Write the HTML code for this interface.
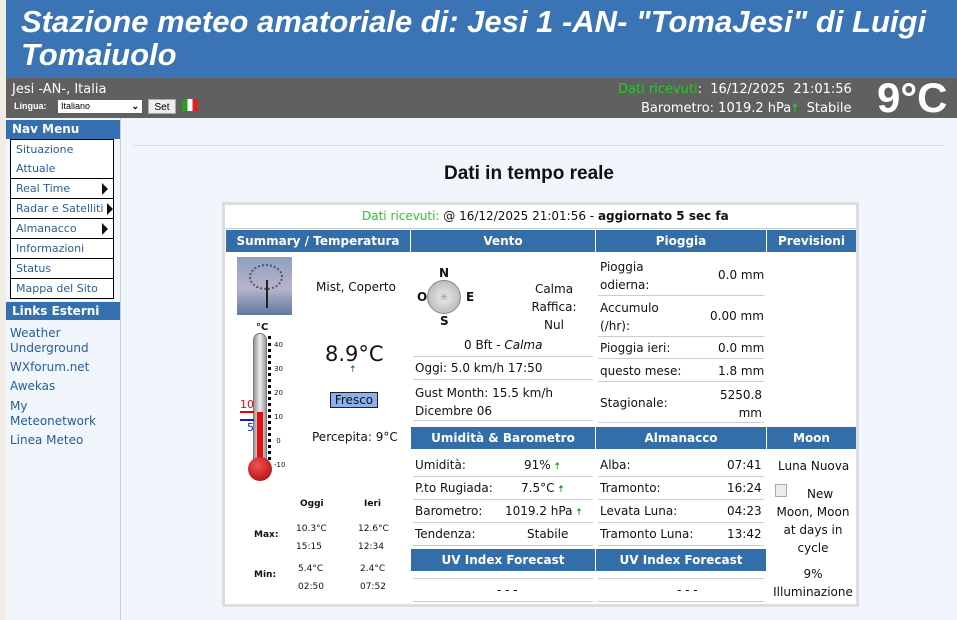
<!DOCTYPE html>
<html><head><meta charset="utf-8"><style>
*{margin:0;padding:0;box-sizing:border-box}
body{width:957px;height:620px;overflow:hidden;background:#f0f6fc;font-family:"DejaVu Sans","Liberation Sans",sans-serif;font-size:12px;color:#111;position:relative}
.a{position:absolute;white-space:nowrap}
#hdr{position:absolute;left:6px;top:0;width:951px;height:78px;background:#3a74b4}
#hdr h1{position:absolute;left:15px;top:5px;font:italic bold 31px/33px "Liberation Sans",sans-serif;color:#fff;width:930px;white-space:normal}
#bar{position:absolute;left:6px;top:78px;width:951px;height:40px;background:#606060;color:#fff}
.nh{position:absolute;left:6px;width:114px;background:#3470b0;color:#fff;font-weight:bold;font-size:12px;padding-left:6px}
.menu{position:absolute;left:10px;top:139px;width:104px;border:1px solid #000;background:#fff}
.menu div{border-bottom:1px solid #000;font-size:11px;color:#2a5d96;padding:0 5px;line-height:19px;position:relative}
.menu div:last-child{border-bottom:0}
.tri{position:absolute;right:5px;top:4px;width:0;height:0;border-left:6px solid #111;border-top:6px solid transparent;border-bottom:6px solid transparent}
.lk{position:absolute;left:10px;font-size:12px;color:#2a5d96;line-height:15px}
.th{position:absolute;background:#336ea9;color:#fff;font-weight:bold;font-size:12px;text-align:center;height:22px;line-height:22px}
.ln{position:absolute;height:1px;background:#ccc}
.g{color:#1a9a1a}
.up{color:#1a9a1a;font-size:10px}
</style></head><body>
<div class="a" style="left:0;top:0;width:6px;height:620px;background:#f0ece4"></div>
<div id="hdr"><h1>Stazione meteo amatoriale di: Jesi 1 -AN- "TomaJesi" di Luigi Tomaiuolo</h1></div>
<div id="bar">
<div class="a" style="left:6px;top:4px;font-size:13px">Jesi -AN-, Italia</div>
<div class="a" style="left:8px;top:23px;font-size:9px;font-weight:bold;font-family:'Liberation Sans',sans-serif">Lingua:</div>
<div class="a" style="left:52px;top:22px;width:84px;height:13px;background:#fff;color:#000;font:9px 'Liberation Sans',sans-serif;padding-left:3px;line-height:13px">Italiano<span style="position:absolute;right:3px;font-weight:bold">⌄</span></div>
<div class="a" style="left:142px;top:21px;width:28px;height:15px;background:#eee;color:#000;font:10px 'Liberation Sans',sans-serif;text-align:center;line-height:15px;border:1px solid #aaa">Set</div>
<div class="a" style="left:176px;top:21px;width:16px;height:12px;background:linear-gradient(90deg,#2a9a2a 33%,#fff 33% 66%,#d22 66%)"></div>
<div class="a" style="left:612px;top:4px;font-size:13px"><span style="color:#2c2">Dati ricevuti</span>:&nbsp; 16/12/2025&nbsp; 21:01:56</div>
<div class="a" style="left:635px;top:21px;font-size:13px">Barometro: 1019.2 hPa<span style="color:#2c2">🠅</span>&nbsp; Stabile</div>
<div class="a" style="left:871px;top:-4px;font:bold 42px/48px 'Liberation Sans',sans-serif">9°C</div>
</div>
<div class="nh" style="top:120px;height:19px;line-height:19px">Nav Menu</div>
<div class="menu">
<div>Situazione<br>Attuale</div>
<div>Real Time<span class="tri"></span></div>
<div>Radar e Satelliti<span class="tri" style="right:0"></span></div>
<div>Almanacco<span class="tri"></span></div>
<div>Informazioni</div>
<div>Status</div>
<div>Mappa del Sito</div>
</div>
<div class="nh" style="top:302px;height:18px;line-height:18px">Links Esterni</div>
<div class="lk" style="top:326px">Weather<br>Underground</div>
<div class="lk" style="top:360px">WXforum.net</div>
<div class="lk" style="top:379px">Awekas</div>
<div class="lk" style="top:399px">My<br>Meteonetwork</div>
<div class="lk" style="top:433px">Linea Meteo</div>
<div class="a" style="left:120px;top:118px;width:1px;height:502px;background:#ccc"></div>
<div class="ln" style="left:133px;top:145px;width:811px;background:#ddd"></div>
<div class="a" style="left:444px;top:163px;font:bold 19px 'Liberation Sans',sans-serif">Dati in tempo reale</div>
<div class="a" style="left:222px;top:202px;width:637px;height:405px;background:#fff;border:3px solid #ddd"></div>
<div class="a" style="left:362px;top:209px"><span style="color:#2c2">Dati ricevuti:</span> @ 16/12/2025 21:01:56 - <b>aggiornato 5 sec fa</b></div>
<div class="ln" style="left:225px;top:228px;width:631px"></div>
<div class="th" style="left:226px;top:230px;width:184px">Summary / Temperatura</div>
<div class="th" style="left:411px;top:230px;width:184px">Vento</div>
<div class="th" style="left:596px;top:230px;width:170px">Pioggia</div>
<div class="th" style="left:767px;top:230px;width:89px">Previsioni</div>
<div class="a" style="left:237px;top:257px;width:55px;height:58px;background:linear-gradient(#8ea0c0,#b7b3cc 55%,#5c7aa0)"></div>
<div class="a" style="left:249px;top:264px;width:34px;height:26px;border-radius:50%;border:2px dotted #2a3040;opacity:.7"></div>
<div class="a" style="left:266px;top:280px;width:2px;height:28px;background:#222"></div>
<div class="a" style="left:316px;top:280px">Mist, Coperto</div>
<div class="a" style="left:256px;top:322px;font-size:10px;font-weight:bold">°C</div>
<div class="a" style="left:253px;top:333px;width:14px;height:132px;border-radius:7px;background:linear-gradient(90deg,#999,#eee,#999);border:1px solid #777"></div>
<div class="a" style="left:257px;top:412px;width:6px;height:50px;background:#e01010"></div>
<div class="a" style="left:248px;top:457px;width:24px;height:24px;border-radius:50%;background:radial-gradient(circle at 40% 35%,#e55,#a00)"></div>
<div class="a" style="left:268px;top:336px;width:4px;height:124px;border-left:3px dotted #000"></div>
<div class="a" style="left:274px;top:333px;font-size:7px;line-height:24px">40<br>30<br>20<br>10<br>&nbsp;0<br>-10</div>
<div class="a" style="left:240px;top:398px;color:#e00;font-size:11px;border-bottom:2px solid #e00;width:14px">10</div>
<div class="a" style="left:240px;top:419px;color:#12c;font-size:11px;border-top:2px solid #12c;width:14px;text-align:right">5</div>
<div class="a" style="left:325px;top:342px;font-size:21px">8.9°C</div>
<div class="a up" style="left:350px;top:362px">🠅</div>
<div class="a" style="left:330px;top:392px;width:48px;height:16px;background:#8cb0e8;border:1px solid #222;text-align:center;line-height:14px">Fresco</div>
<div class="a" style="left:312px;top:430px">Percepita: 9°C</div>
<div class="a" style="left:300px;top:499px;font-size:9px;font-weight:bold">Oggi</div>
<div class="a" style="left:364px;top:499px;font-size:9px;font-weight:bold">Ieri</div>
<div class="a" style="left:254px;top:530px;font-size:9px;font-weight:bold">Max:</div>
<div class="a" style="left:254px;top:570px;font-size:9px;font-weight:bold">Min:</div>
<div class="a" style="left:296px;top:520px;font-size:9px;line-height:18px">10.3°C<br>15:15</div>
<div class="a" style="left:358px;top:520px;font-size:9px;line-height:18px">12.6°C<br>12:34</div>
<div class="a" style="left:298px;top:560px;font-size:9px;line-height:18px">5.4°C<br>02:50</div>
<div class="a" style="left:360px;top:560px;font-size:9px;line-height:18px">2.4°C<br>07:52</div>
<div class="a" style="left:427px;top:280px;width:34px;height:34px;border-radius:50%;background:radial-gradient(#eee,#aaa);border:1px solid #888;text-align:center;line-height:32px;color:#999">✳</div>
<div class="a" style="left:439px;top:266px;font-weight:bold">N</div>
<div class="a" style="left:417px;top:290px;font-weight:bold">O</div>
<div class="a" style="left:466px;top:290px;font-weight:bold">E</div>
<div class="a" style="left:440px;top:314px;font-weight:bold">S</div>
<div class="a" style="left:520px;top:280px;text-align:center;line-height:18px;width:68px">Calma<br>Raffica:<br>Nul</div>
<div class="a" style="left:464px;top:338px">0 Bft - <i>Calma</i></div>
<div class="ln" style="left:413px;top:356px;width:180px"></div>
<div class="a" style="left:415px;top:361px">Oggi: 5.0 km/h 17:50</div>
<div class="ln" style="left:413px;top:379px;width:180px"></div>
<div class="a" style="left:415px;top:384px;line-height:18px">Gust Month: 15.5 km/h<br>Dicembre 06</div>
<div class="ln" style="left:413px;top:420px;width:180px"></div>
<div class="a" style="left:600px;top:258px;line-height:18px">Pioggia<br>odierna:</div><div class="a" style="left:718px;top:268px">0.0 mm</div>
<div class="ln" style="left:598px;top:295px;width:166px"></div>
<div class="a" style="left:600px;top:299px;line-height:18px">Accumulo<br>(/hr):</div><div class="a" style="left:710px;top:309px">0.00 mm</div>
<div class="ln" style="left:598px;top:336px;width:166px"></div>
<div class="a" style="left:600px;top:341px">Pioggia ieri:</div><div class="a" style="left:718px;top:341px">0.0 mm</div>
<div class="ln" style="left:598px;top:358px;width:166px"></div>
<div class="a" style="left:600px;top:364px">questo mese:</div><div class="a" style="left:718px;top:364px">1.8 mm</div>
<div class="ln" style="left:598px;top:381px;width:166px"></div>
<div class="a" style="left:600px;top:396px">Stagionale:</div><div class="a" style="left:720px;top:386px;line-height:18px;text-align:right">5250.8<br>mm</div>
<div class="ln" style="left:598px;top:422px;width:166px"></div>
<div class="th" style="left:411px;top:427px;width:184px">Umidità &amp; Barometro</div>
<div class="th" style="left:596px;top:427px;width:170px">Almanacco</div>
<div class="th" style="left:767px;top:427px;width:89px">Moon</div>
<div class="a" style="left:415px;top:458px">Umidità:</div><div class="a" style="left:524px;top:458px">91% <span class="up">🠅</span></div>
<div class="ln" style="left:413px;top:476px;width:180px"></div>
<div class="a" style="left:415px;top:481px">P.to Rugiada:</div><div class="a" style="left:521px;top:481px">7.5°C <span class="up">🠅</span></div>
<div class="ln" style="left:413px;top:499px;width:180px"></div>
<div class="a" style="left:415px;top:504px">Barometro:</div><div class="a" style="left:505px;top:504px">1019.2 hPa <span class="up">🠅</span></div>
<div class="ln" style="left:413px;top:522px;width:180px"></div>
<div class="a" style="left:415px;top:527px">Tendenza:</div><div class="a" style="left:527px;top:527px">Stabile</div>
<div class="ln" style="left:413px;top:545px;width:180px"></div>
<div class="a" style="left:600px;top:458px">Alba:</div><div class="a" style="left:727px;top:458px">07:41</div>
<div class="ln" style="left:598px;top:476px;width:166px"></div>
<div class="a" style="left:600px;top:481px">Tramonto:</div><div class="a" style="left:727px;top:481px">16:24</div>
<div class="ln" style="left:598px;top:499px;width:166px"></div>
<div class="a" style="left:600px;top:504px">Levata Luna:</div><div class="a" style="left:727px;top:504px">04:23</div>
<div class="ln" style="left:598px;top:522px;width:166px"></div>
<div class="a" style="left:600px;top:527px">Tramonto Luna:</div><div class="a" style="left:727px;top:527px">13:42</div>
<div class="ln" style="left:598px;top:545px;width:166px"></div>
<div class="th" style="left:411px;top:549px;width:184px">UV Index Forecast</div>
<div class="th" style="left:596px;top:549px;width:170px">UV Index Forecast</div>
<div class="ln" style="left:413px;top:578px;width:180px"></div>
<div class="ln" style="left:598px;top:578px;width:166px"></div>
<div class="a" style="left:497px;top:583px">- - -</div>
<div class="a" style="left:677px;top:583px">- - -</div>
<div class="ln" style="left:413px;top:601px;width:180px"></div>
<div class="ln" style="left:598px;top:601px;width:166px"></div>
<div class="a" style="left:778px;top:459px">Luna Nuova</div>
<div class="a" style="left:775px;top:484px;width:12px;height:13px;border:1px solid #aaa;background:#e8eef0"></div>
<div class="a" style="left:807px;top:485px;line-height:18px">New</div>
<div class="a" style="left:770px;top:503px;width:86px;text-align:center;line-height:18px">Moon, Moon<br>at days in<br>cycle</div>
<div class="a" style="left:770px;top:565px;width:86px;text-align:center;line-height:18px">9%<br>Illuminazione</div>
</body></html>
